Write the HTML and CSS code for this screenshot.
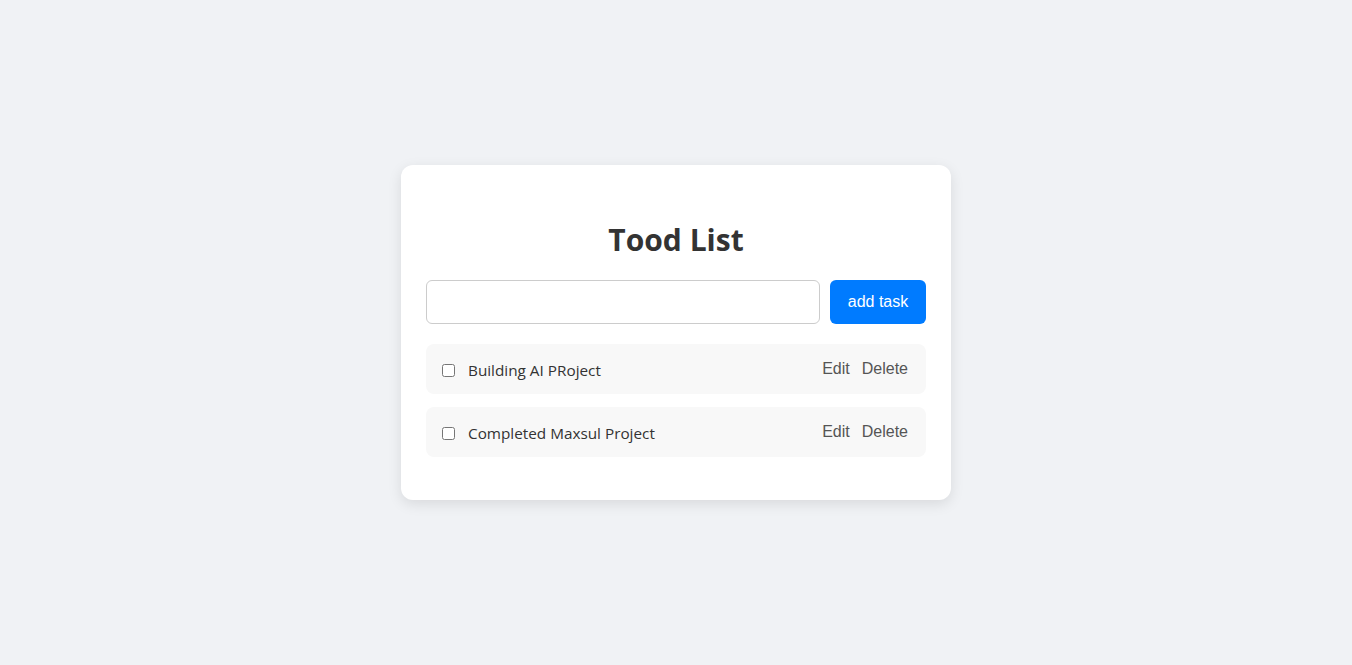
FILE: index.html
```html
<!DOCTYPE html>
<html>
<head>
<meta charset="utf-8">
<link rel="stylesheet" href="styles.css">
</head>
<body>
<div class="page">
  <div class="card">
    <h1 class="title">Tood List</h1>
    <div class="add-row">
      <input class="task-input" type="text">
      <button class="add-btn">add task</button>
    </div>
    <ul class="list">
      <li class="item">
        <label class="item-left"><input type="checkbox" class="check"><span class="item-text">Building AI PRoject</span></label>
        <div class="actions"><button class="act">Edit</button><button class="act">Delete</button></div>
      </li>
      <li class="item">
        <label class="item-left"><input type="checkbox" class="check"><span class="item-text">Completed Maxsul Project</span></label>
        <div class="actions"><button class="act">Edit</button><button class="act">Delete</button></div>
      </li>
    </ul>
  </div>
</div>
</body>
</html>
```
FILE: styles.css
```css
html, body {
  margin: 0;
  padding: 0;
  height: 100%;
}
body {
  background: #f0f2f5;
  font-family: "Open Sans", "Noto Sans", sans-serif;
  color: #333;
}
.page {
  min-height: 100%;
  display: flex;
  align-items: center;
  justify-content: center;
}
.card {
  width: 500px;
  background: #fff;
  border-radius: 12px;
  padding: 25px 25px 43px;
  box-shadow: 0 4px 14px rgba(0, 0, 0, 0.1);
}
.title {
  text-align: center;
  font-size: 30px;
  font-weight: 700;
  margin: 28px 0 19px;
  line-height: 43px;
  color: #333;
}
.add-row {
  display: flex;
  gap: 10px;
}
.task-input {
  flex: 1;
  height: 44px;
  box-sizing: border-box;
  border: 1px solid #ccc;
  border-radius: 6px;
  padding: 0 10px;
  font-size: 16px;
}
.add-btn {
  width: 96px;
  height: 44px;
  background: #007bff;
  color: #fff;
  border: none;
  border-radius: 6px;
  font-family: "Liberation Sans", Arial, sans-serif;
  font-size: 16px;
}
.list {
  list-style: none;
  margin: 20px 0 0;
  padding: 0;
  display: flex;
  flex-direction: column;
  gap: 13px;
}
.item {
  height: 50px;
  box-sizing: border-box;
  background: #f8f8f8;
  border-radius: 8px;
  display: flex;
  align-items: center;
  justify-content: space-between;
  padding: 0 12px 0 16px;
}
.item-left {
  display: flex;
  align-items: center;
  padding-top: 1px;
}
.check {
  width: 13px;
  height: 13px;
  margin: 1px 13px 0 0;
}
.item-text {
  font-size: 15.3px;
  color: #333;
}
.actions {
  display: flex;
  gap: 0;
  padding-bottom: 1px;
}
.act {
  background: none;
  border: none;
  font-family: "Liberation Sans", Arial, sans-serif;
  font-size: 16px;
  color: #555;
  padding: 0 6px;
}
```
